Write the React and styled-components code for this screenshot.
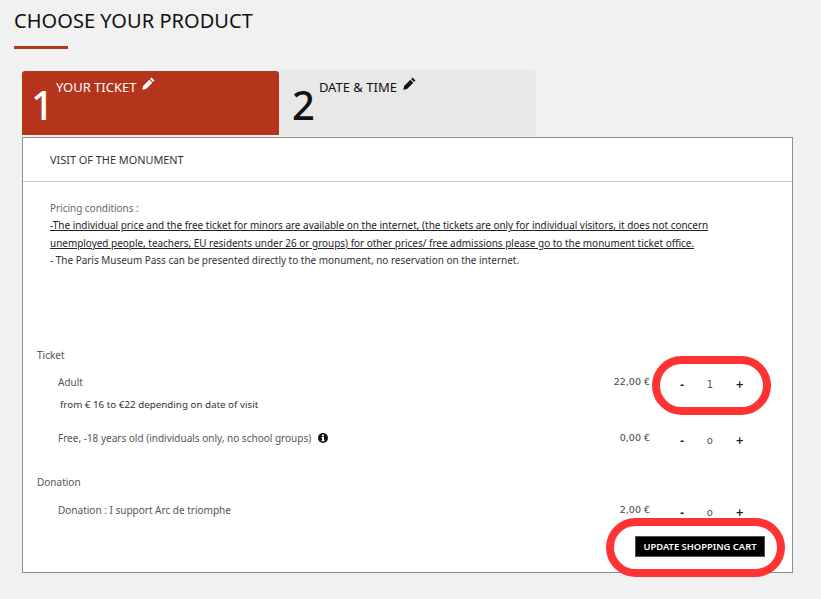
import React from 'react';
import styled, { createGlobalStyle } from 'styled-components';

const red = '#b5341c';

const GlobalStyle = createGlobalStyle`
    html, body {
        margin: 0;
        background: #f1f1f1;
        font-family: "Noto Sans", "Liberation Sans", sans-serif;
        color: #333;
    }
`
const Page = styled.div`
    position: relative;
    width: 821px;
    height: 599px;
    overflow: hidden;
    padding: 9px 28px 0 14px;
    box-sizing: border-box;
`
const Title = styled.h1`
    margin: 0;
    height: 24px;
    font: 400 20px/24px "Noto Sans", sans-serif;
    letter-spacing: 0.05px;
    color: #111;
`
const Rule = styled.div`
    width: 54px;
    height: 3px;
    margin-top: 13px;
    background: ${red};
`
const Wrap = styled.div`
    margin: 21px 0 0 8px;
    width: 771px;
`
const Tabs = styled.div`
    display: flex;
    align-items: flex-end;
    width: 514px;
    height: 66px;
`
const Tab = styled.div`
    flex: 0 0 50%;
    height: ${p => (p.$active ? '64px' : '66px')};
    margin-bottom: ${p => (p.$active ? '1px' : '0')};
    display: flex;
    box-sizing: border-box;
    padding: ${p => (p.$active ? '6px 0 0 9px' : '7px 0 0 13px')};
    gap: ${p => (p.$active ? '2px' : '4px')};
    background: ${p => (p.$active ? red : '#e8e8e8')};
    color: ${p => (p.$active ? '#fff' : '#111')};
    border-radius: 3px 3px 0 0;
`
const TabNumber = styled.span`
    font: 500 40px/40px "Noto Sans", sans-serif;
    margin-top: 8px;
`
const TabLabel = styled.span`
    font-size: 13px;
    line-height: 17px;
`
const Pencil = styled.svg`
    width: 13px;
    height: 13px;
    margin-left: 6px;
    vertical-align: 2px;
    fill: currentColor;
`
const Panel = styled.div`
    height: 436px;
    box-sizing: border-box;
    margin-top: 1px;
    background: #fff;
    border: 1px solid #8f8f8f;
    display: flex;
    flex-direction: column;
`
const PanelHead = styled.div`
    height: 44px;
    box-sizing: border-box;
    padding: 15px 0 0 27px;
    border-bottom: 1px solid #c8c8c8;
    font-size: 10.9px;
    line-height: 14px;
    color: #333;
`
const Conditions = styled.div`
    padding: 18px 0 0 27px;
    height: 166px;
    box-sizing: border-box;
    font-size: 9.95px;
    line-height: 17.4px;
    color: #333;
    span { color: #666; }
    u { color: #222; }
`
const Group = styled.div`
    padding-left: 14px;
    font-size: 10px;
    line-height: 14px;
    color: #555;
    height: ${p => p.$h}px;
`
const Row = styled.div`
    display: grid;
    grid-template-columns: 1fr 62px 142px;
    align-items: start;
    height: ${p => p.$h}px;
    margin-left: 35px;
    color: #555;
`
const RowName = styled.div`
    font-size: 10px;
    line-height: 14px;
    display: flex;
    align-items: center;
    gap: 7px;
`
const RowNote = styled.div`
    margin: 9px 0 0 2px;
    font-size: 9.8px;
    line-height: 14px;
    color: #333;
`
const Price = styled.div`
    font: 400 9.5px/14px "DejaVu Sans", sans-serif;
    text-align: right;
    color: #444;
`
const Stepper = styled.div`
    display: flex;
    justify-content: space-between;
    width: 64px;
    margin: 3px 0 0 30px;
    font: 400 10px/14px "DejaVu Sans", sans-serif;
    color: #333;
`
const StepButton = styled.span`
    font-weight: 700;
    color: #222;
`
const StepValue = styled.span`
    font-size: 10px;
    color: #555;
`
const Footer = styled.div`
    display: flex;
    justify-content: flex-end;
    padding: 0 27px 0 0;
`
const CartButton = styled.button`
    height: 21px;
    width: 130px;
    padding: 0;
    border: 1px solid #555;
    background: #000;
    color: #fff;
    font: 600 9.4px/19px "Noto Sans", sans-serif;
`
const Ring = styled.div`
    position: absolute;
    box-sizing: border-box;
    border: 8px solid #ff3333;
    border-radius: 30px;
    left: ${p => p.$x}px;
    top: ${p => p.$y}px;
    width: ${p => p.$w}px;
    height: ${p => p.$h}px;
`

const PencilIcon = () => (
    <Pencil viewBox="0 0 14 14">
        <path d="M10.2 0.6l3.2 3.2-1.5 1.5-3.2-3.2zM7.9 2.9l3.2 3.2-6.8 6.8-4 .9.9-4z" />
    </Pencil>
);

const InfoIcon = () => (
    <svg width="10" height="10" viewBox="0 0 10 10">
        <circle cx="5" cy="5" r="5" fill="#111" />
        <rect x="4" y="1.6" width="2" height="1.7" fill="#fff" />
        <path d="M3.4 4.1h2.6v3.2h.7v1H3.4v-1h.7V5.1h-.7z" fill="#fff" />
    </svg>
);

const Count = ({ value }) => (
    <Stepper>
        <StepButton>-</StepButton>
        <StepValue>{value}</StepValue>
        <StepButton>+</StepButton>
    </Stepper>
);

export default function App() {
    return (
        <Page>
            <GlobalStyle />
            <Title>CHOOSE YOUR PRODUCT</Title>
            <Rule />
            <Wrap>
                <Tabs>
                    <Tab $active>
                        <TabNumber>1</TabNumber>
                        <TabLabel>YOUR TICKET<PencilIcon /></TabLabel>
                    </Tab>
                    <Tab>
                        <TabNumber>2</TabNumber>
                        <TabLabel>DATE &amp; TIME<PencilIcon /></TabLabel>
                    </Tab>
                </Tabs>
                <Panel>
                    <PanelHead>VISIT OF THE MONUMENT</PanelHead>
                    <Conditions>
                        <span>Pricing conditions :</span><br />
                        <u>-The individual price and the free ticket for minors are available on the internet, (the tickets are only for individual visitors, it does not concern</u><br />
                        <u>unemployed people, teachers, EU residents under 26 or groups) for other prices/ free admissions please go to the monument ticket office.</u><br />
                        - The Paris Museum Pass can be presented directly to the monument, no reservation on the internet.
                    </Conditions>
                    <Group $h={27}>Ticket</Group>
                    <Row $h={56}>
                        <div>
                            <RowName>Adult</RowName>
                            <RowNote>from € 16 to €22 depending on date of visit</RowNote>
                        </div>
                        <Price>22,00 €</Price>
                        <Count value="1" />
                    </Row>
                    <Row $h={44}>
                        <RowName>Free, -18 years old (individuals only, no school groups) <InfoIcon /></RowName>
                        <Price>0,00 €</Price>
                        <Count value="o" />
                    </Row>
                    <Group $h={28}>Donation</Group>
                    <Row $h={33}>
                        <RowName>Donation : I support Arc de triomphe</RowName>
                        <Price>2,00 €</Price>
                        <Count value="o" />
                    </Row>
                    <Footer><CartButton>UPDATE SHOPPING CART</CartButton></Footer>
                </Panel>
            </Wrap>
            <Ring $x={652} $y={356} $w={119} $h={59} />
            <Ring $x={606} $y={518} $w={179} $h={59} />
        </Page>
    );
}
